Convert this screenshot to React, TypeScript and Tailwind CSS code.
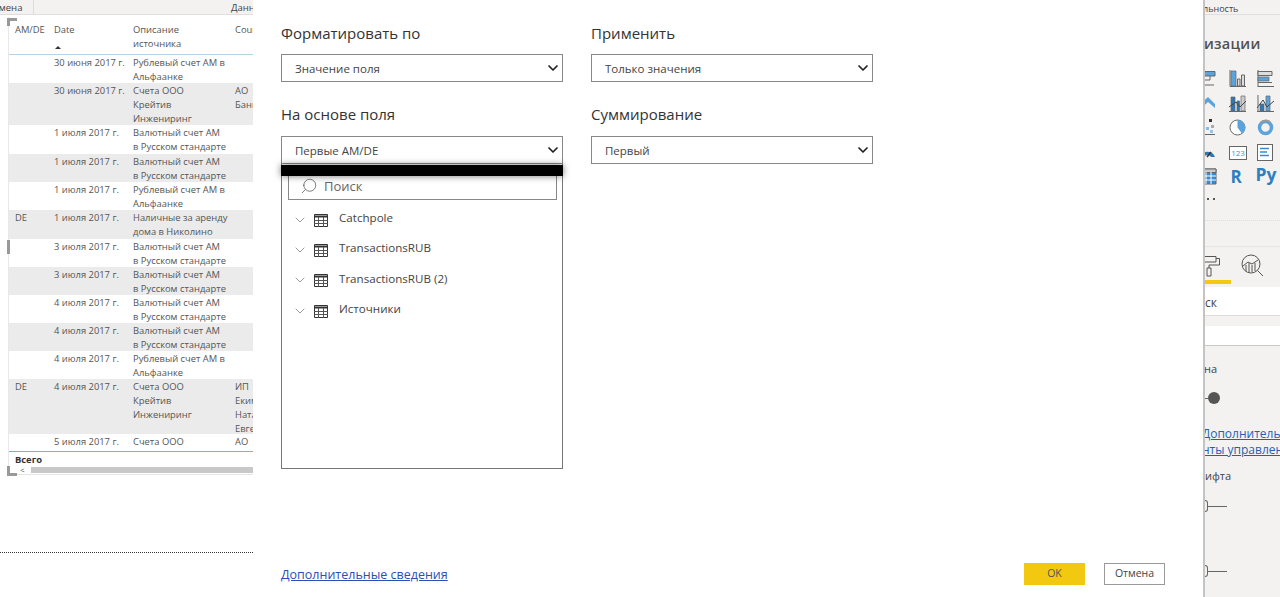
import React from 'react';
import { ChevronDown, Search } from 'lucide-react';

const font = "font-['Open_Sans','Noto_Sans',sans-serif]";

type Row = { h: string; grey?: boolean; am?: string; date: string; src: string[]; cou?: string[] };

const rows: Row[] = [
  { h: 'h-[28px]', date: '30 июня 2017 г.', src: ['Рублевый счет АМ в', 'Альфаанке'] },
  { h: 'h-[42px]', grey: true, date: '30 июня 2017 г.', src: ['Счета ООО', 'Крейтив', 'Инжениринг'], cou: ['АО', 'Банк'] },
  { h: 'h-[29px]', date: '1 июля 2017 г.', src: ['Валютный счет АМ', 'в Русском стандарте'] },
  { h: 'h-[28px]', grey: true, date: '1 июля 2017 г.', src: ['Валютный счет АМ', 'в Русском стандарте'] },
  { h: 'h-[28px]', date: '1 июля 2017 г.', src: ['Рублевый счет АМ в', 'Альфаанке'] },
  { h: 'h-[29px]', grey: true, am: 'DE', date: '1 июля 2017 г.', src: ['Наличные за аренду', 'дома в Николино'] },
  { h: 'h-[28px]', date: '3 июля 2017 г.', src: ['Валютный счет АМ', 'в Русском стандарте'] },
  { h: 'h-[28px]', grey: true, date: '3 июля 2017 г.', src: ['Валютный счет АМ', 'в Русском стандарте'] },
  { h: 'h-[28px]', date: '4 июля 2017 г.', src: ['Валютный счет АМ', 'в Русском стандарте'] },
  { h: 'h-[28px]', grey: true, date: '4 июля 2017 г.', src: ['Валютный счет АМ', 'в Русском стандарте'] },
  { h: 'h-[28px]', date: '4 июля 2017 г.', src: ['Рублевый счет АМ в', 'Альфаанке'] },
  { h: 'h-[55px]', grey: true, am: 'DE', date: '4 июля 2017 г.', src: ['Счета ООО', 'Крейтив', 'Инжениринг'], cou: ['ИП', 'Екимова', 'Наталья', 'Евгеньевна'] },
  { h: 'h-[17px]', date: '5 июля 2017 г.', src: ['Счета ООО'], cou: ['АО'] },
];

const TableRow = ({ row }: { row: Row }) => (
  <div className={`flex ${row.h} overflow-hidden pt-[1px] leading-[14px] ${row.grey ? 'bg-[#ebebeb]' : 'bg-white'}`}>
    <div className="w-[45px] pl-[6px] shrink-0">{row.am}</div>
    <div className="w-[79px] shrink-0 whitespace-nowrap">{row.date}</div>
    <div className="w-[102px] shrink-0 whitespace-nowrap">
      {row.src.map((s) => <div key={s}>{s}</div>)}
    </div>
    <div className="whitespace-nowrap">
      {row.cou?.map((s) => <div key={s}>{s}</div>)}
    </div>
  </div>
);

const LeftReport = () => (
  <div className={`w-[253px] shrink-0 h-full overflow-hidden bg-white flex flex-col ${font}`}>
    <div className="h-[15px] shrink-0 bg-[#f3f2f1] border-b border-[#e1dfdd] flex items-center text-[9.5px] text-[#444] whitespace-nowrap">
      <span className="-ml-[12px] w-[45px] shrink-0 overflow-hidden pt-[2px]">Замена</span>
      <span className="w-px h-full shrink-0 bg-[#dcdcdc]" />
      <span className="ml-[197px] shrink-0 pt-[2px]">Данные</span>
    </div>
    <div className="relative ml-2 mt-[2px] w-[260px] text-[9.4px] text-[#555] border-l border-[#e8e8e8]">
      <span className="absolute -left-[2px] top-[1px] w-[10px] h-[8px] border-l-[3px] border-t-[3px] border-[#999]" />
      <span className="absolute -left-[2px] top-[223px] w-[3px] h-[14px] bg-[#999]" />
      <div className="flex h-[38px] pt-[6px] leading-[14px] border-b border-[#b8d4e4]">
        <div className="w-[45px] pl-[6px] shrink-0">AM/DE</div>
        <div className="w-[79px] shrink-0 relative">
          Date
          <span className="absolute left-[1px] top-[23px] w-0 h-0 border-l-[3px] border-r-[3px] border-b-[3px] border-l-transparent border-r-transparent border-b-[#333]" />
        </div>
        <div className="w-[102px] shrink-0">Описание<br />источника</div>
        <div>Country</div>
      </div>
      {rows.map((r, i) => <TableRow key={i} row={r} />)}
      <div className="h-[15px] border-t border-[#7fb0cb] pl-[6px] pt-[1px] font-bold text-[#333] leading-[13px]">Всего</div>
      <div className="relative h-[7px] flex items-center pl-[11px]">
        <span className="absolute -left-[2px] top-0 w-[10px] h-[10px] border-l-[3px] border-b-[3px] border-[#999]" />
        <span className="text-[8px] leading-none">&lt;</span>
        <span className="ml-[6px] flex-1 h-[6px] bg-[#c8c8c8]" />
      </div>
      <div className="h-px bg-[#e4e4e4] mt-px" />
    </div>
    <div className="mt-[77px] border-t border-dotted border-[#333]" />
  </div>
);

const Select = ({ value }: { value: string }) => (
  <div className="w-[282px] h-[28px] border border-[#8a8886] bg-white flex items-center justify-between pl-[13px] pr-[1px] text-[11.5px] text-[#444]">
    <span className="mt-[2px]">{value}</span>
    <ChevronDown size={16} strokeWidth={2.6} className="text-[#222]" />
  </div>
);

const Field = ({ label, value, raised }: { label: string; value: string; raised?: boolean }) => (
  <div className="w-[282px] flex flex-col">
    <div className={`text-[15px] leading-[20px] text-[#333] ${raised ? 'mb-[12px] -mt-px' : 'mb-[11px]'}`}>{label}</div>
    <Select value={value} />
  </div>
);

const TableIcon = () => (
  <svg width="14" height="13" viewBox="0 0 14 13" className="shrink-0">
    <path d="M0.5 0.5H13.5V12.5H0.5Z" fill="none" stroke="#333" />
    <path d="M0.5 1.5H13.5V3.5H0.5Z" fill="#333" />
    <path d="M0 6.5H14M0 9.5H14M4.5 3V13M9.5 3V13" stroke="#555" />
  </svg>
);

const TreeItem = ({ name }: { name: string }) => (
  <div className="h-[30.4px] flex items-center pl-[10px] text-[11.6px] text-[#444]">
    <ChevronDown size={16} strokeWidth={1} className="text-[#666] shrink-0 mt-[3px]" />
    <span className="ml-[6px] mt-[4px]"><TableIcon /></span>
    <span className="ml-[11px] -mt-[1px]">{name}</span>
  </div>
);

const FieldDropdown = () => (
  <div className="absolute left-0 top-[59px] w-[282px] h-[305px] border border-[#777] border-t-0 bg-white">
    <div className="absolute -left-px right-[-1px] top-[1px] h-[11px] bg-black shadow-[0_0_7px_rgba(0,0,0,0.55)]" />
    <div className="ml-[6px] mr-[5px] mt-[2px] h-[34px] border border-[#8a8886] flex items-end pb-[4px] pl-[11px] text-[13px] text-[#666]">
      <Search size={18} strokeWidth={1} className="-scale-x-100 text-[#555]" />
      <span className="ml-[6px] leading-[18px]">Поиск</span>
    </div>
    <div className="mt-[3px]">
      {['Catchpole', 'TransactionsRUB', 'TransactionsRUB (2)', 'Источники'].map((t) => <TreeItem key={t} name={t} />)}
    </div>
  </div>
);

const Dialog = () => (
  <div className={`w-[950px] shrink-0 h-full bg-white flex flex-col pl-[28px] pt-[23px] pb-[12px] pr-[38px] ${font}`}>
    <div className="flex gap-[28px]">
      <Field label="Форматировать по" value="Значение поля" />
      <Field label="Применить" value="Только значения" />
    </div>
    <div className="flex gap-[28px] mt-[23px] relative">
      <Field raised label="На основе поля" value="Первые AM/DE" />
      <Field raised label="Суммирование" value="Первый" />
      <FieldDropdown />
    </div>
    <div className="mt-auto flex items-center justify-between">
      <a className="text-[12.5px] text-[#2a4fb5] underline mt-[3px]">Дополнительные сведения</a>
      <div className="flex gap-[19px] text-[10.5px]">
        <div className="w-[61px] h-[22px] bg-[#f2c811] flex items-center justify-center text-[#555]">OK</div>
        <div className="w-[61px] h-[22px] border border-[#999] bg-white flex items-center justify-center text-[#444]">Отмена</div>
      </div>
    </div>
  </div>
);

const blue = '#5ba3dc';
const dark = '#666';

const vizIcons: React.ReactNode[][] = [
  [
    <g key="a"><path d="M0 1.5H15V6H0Z" fill={blue} stroke={dark} /><path d="M0 6V10H10V6M0 10V15H14" fill="none" stroke={dark} /></g>,
    <g key="b"><path d="M1 0V16.5H17" fill="none" stroke={dark} /><path d="M2 1H7V16H2Z" fill={blue} stroke={dark} strokeWidth=".7" /><path d="M8.5 9H11V16H8.5ZM12.5 5H15.5V16H12.5Z" fill="#ddd" stroke={dark} /></g>,
    <g key="c"><path d="M1 0V17M1 16.5H17" fill="none" stroke={dark} /><path d="M1 1.5H15V5.5H1Z" fill="#ddd" stroke={dark} /><path d="M1 7H12V11H1Z" fill={blue} stroke={dark} strokeWidth=".7" /><path d="M1 12.5H15" stroke={dark} /></g>,
  ],
  [
    <path key="a" d="M0 9L8 2L15 9V13L8 7L0 14Z" fill={blue} />,
    <g key="b"><path d="M2 2H6V16H2ZM8 6H10.5V16H8Z" fill="#2f78b8" stroke={dark} strokeWidth=".7" /><path d="M12 1H16V16H12Z" fill="#ccc" stroke={dark} strokeWidth=".7" /><path d="M0 12L7 7L11 12L17 6" fill="none" stroke="#444" /><path d="M0 16.5H17" stroke={dark} /></g>,
    <g key="c"><path d="M3 9H7V16H3Z" fill="#2f78b8" stroke={dark} strokeWidth=".7" /><path d="M9 1H13V16H9Z" fill={blue} stroke={dark} strokeWidth=".7" /><path d="M0 13L6 5L10 12L17 6" fill="none" stroke="#444" /><path d="M0 16.5H17M1 0V17" stroke={dark} /></g>,
  ],
  [
    <g key="a"><rect x="9" y="0" width="3" height="3" fill="#333" /><rect x="6" y="8" width="3" height="3" fill={blue} opacity=".7" /><rect x="11" y="6" width="3" height="3" fill="#aaa" /><rect x="2" y="11" width="3" height="3" fill="#bbb" /><rect x="10" y="11" width="3" height="3" fill={blue} opacity=".6" /><path d="M0 15.5H15" stroke={dark} /></g>,
    <g key="b"><circle cx="8.5" cy="8.5" r="7.5" fill="#fff" stroke={dark} /><path d="M8.5 8.5V1A7.5 7.5 0 0 1 13 14.5Z" fill={blue} /></g>,
    <g key="c"><circle cx="8.5" cy="8.5" r="6" fill="none" stroke={blue} strokeWidth="3.5" /><path d="M3.5 4A7 7 0 0 1 13 3" fill="none" stroke="#999" strokeWidth="2" /></g>,
  ],
  [
    <g key="a"><path d="M0 13A8 8 0 0 1 15 13H11A4 4 0 0 0 4 13Z" fill="#2f78b8" /><path d="M7 13L11 8" stroke="#333" strokeWidth="1.5" /></g>,
    <g key="b"><rect x="0.5" y="2.5" width="17" height="13" fill="#fff" stroke={dark} /><text x="9" y="12" textAnchor="middle" fontSize="8" fill="#4a90c8">123</text></g>,
    <g key="c"><rect x="0.5" y="0.5" width="15" height="16" fill="#fff" stroke={dark} /><path d="M3 4.5H12M3 8H10M3 11.5H12" stroke="#3a8ad0" strokeWidth="1.5" /></g>,
  ],
  [
    <g key="a"><path d="M0 1H16V16H0Z" fill="#3a8ad0" stroke={dark} /><path d="M0 1H16V4.5H0Z" fill="#ccc" stroke={dark} /><path d="M0 8H16M0 12H16M6 4V16M11 4V16" stroke="#fff" /></g>,
    <text key="b" x="7" y="15" textAnchor="middle" fontSize="17" fontWeight="700" fill="#2f7fc0">R</text>,
    <text key="c" x="9" y="13" textAnchor="middle" fontSize="17.5" fontWeight="700" fill="#2f7fc0">Py</text>,
  ],
];

const Slider = ({ knob }: { knob?: boolean }) => (
  <div className="flex items-center">
    {knob ? (
      <>
        <span className="w-[3px] h-px bg-[#666]" />
        <span className="w-[12px] h-[12px] rounded-full bg-[#555]" />
      </>
    ) : (
      <>
        <span className="w-[3px] h-[12px] rounded-r-full border border-l-0 border-[#666]" />
        <span className="w-[19px] h-px bg-[#666]" />
      </>
    )}
  </div>
);

const RightPanel = () => (
  <div className={`flex-1 min-w-0 h-full overflow-hidden bg-[#f3f2f1] border-l-2 border-[#c4c4c4] flex flex-col text-[#444] whitespace-nowrap ${font}`}>
    <div className="h-[15px] shrink-0 border-b border-[#e1dfdd] text-[9px] leading-[17px]">
      <span className="block -ml-[2px]">льность</span>
    </div>
    <div className="mt-[17px] -ml-[1px] h-[24px] shrink-0 text-[14.5px] leading-[24px] font-semibold text-[#505050] tracking-[0.25px]">изации</div>
    <div className="mt-[14px] flex flex-col gap-[7.5px] shrink-0">
      {vizIcons.map((r, i) => (
        <div key={i} className="flex gap-[11.5px] -ml-[5px]">
          {r.map((icon, j) => (
            <svg key={j} width="17" height="17" viewBox="0 0 17 17" className="shrink-0 overflow-visible">{icon}</svg>
          ))}
        </div>
      ))}
    </div>
    <div className="mt-[8px] h-[12px] shrink-0 pl-[2px] flex items-center gap-[4px]">
      <span className="w-[2px] h-[2px] bg-[#555]" />
      <span className="w-[2px] h-[2px] bg-[#555]" />
    </div>
    <div className="mt-[15px] border-t border-dotted border-[#ddd]" />
    <div className="mt-[25px] border-t border-[#e4e4e4]" />
    <div className="h-[37px] flex gap-[10px] shrink-0">
      <div className="w-[26px] h-[37px] border-b-[4px] border-[#f2c811] pt-[8px]">
        <svg width="18" height="22" viewBox="0 0 18 22" fill="none" stroke="#555" className="-ml-[2px]">
          <path d="M0 1.5H13V7H0M13 3.5H16.5V10H6V13M4 13H8V21H4Z" />
        </svg>
      </div>
      <svg width="22" height="22" viewBox="0 0 22 22" fill="none" stroke="#555" className="mt-[7px]">
        <circle cx="10" cy="10" r="9" /><path d="M16.5 16.5L22 22M2 12L7 8L11 10L17 6" /><path d="M5 17V11M8 18V9M11 18V11M14 17V9" />
      </svg>
    </div>
    <div className="mt-[3px] h-[29px] bg-white border-b border-[#ddd] text-[12px] leading-[28px] pt-[2px] shrink-0">ск</div>
    <div className="mt-[10px] h-[20px] bg-white border-b border-[#c8c8c8] shrink-0" />
    <div className="mt-[14px] h-[18px] shrink-0 text-[11px] leading-[18px] -ml-[1px]">на</div>
    <div className="mt-[14px]"><Slider knob /></div>
    <div className="mt-[22px] text-[12px] leading-[16px] text-[#2a5db0] underline">
      <div className="-ml-[3px]">Дополнительн</div>
      <div className="-ml-[3px]">нты управлен</div>
    </div>
    <div className="mt-[9px] h-[18px] shrink-0 text-[11px] leading-[18px]">ифта</div>
    <div className="mt-[15px]"><Slider /></div>
    <div className="mt-[53px]"><Slider /></div>
  </div>
);

export default function App() {
  return (
    <div className="w-[1280px] h-[597px] flex overflow-hidden bg-white">
      <LeftReport />
      <Dialog />
      <RightPanel />
    </div>
  );
}
